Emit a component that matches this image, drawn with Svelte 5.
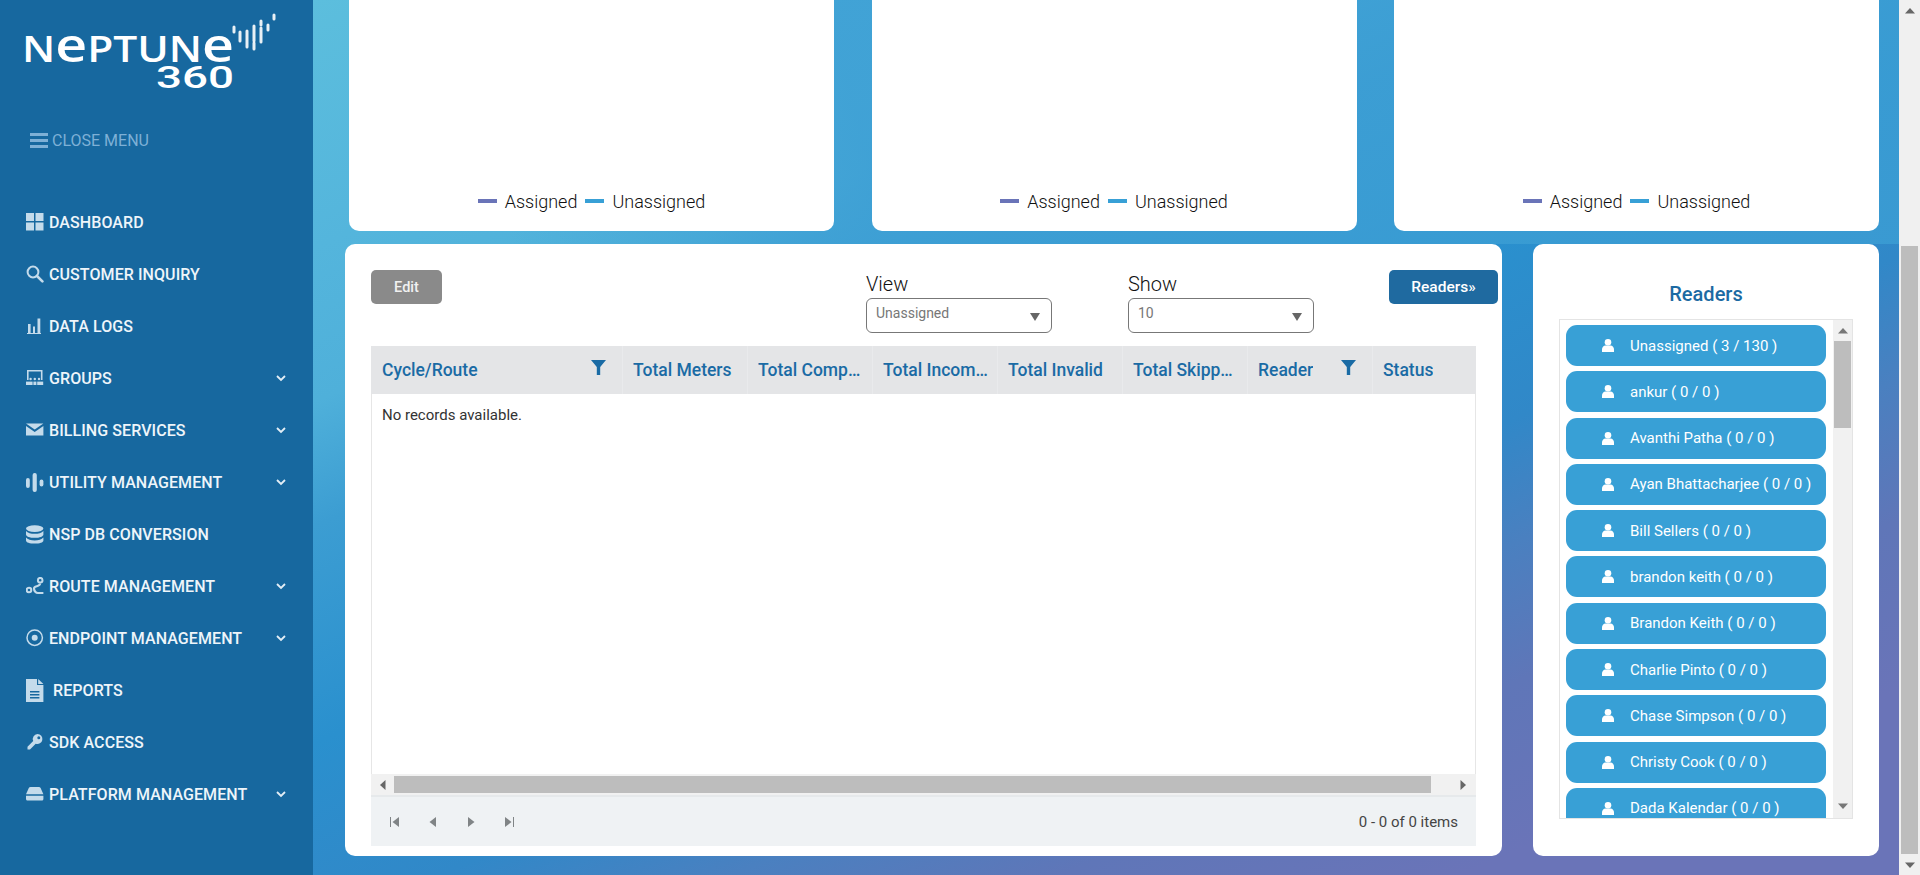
<script>
  const icons = {
    dashboard: '<rect x="0" y="0" width="8" height="8"/><rect x="9.5" y="0" width="8" height="8"/><rect x="0" y="9.5" width="8" height="8"/><rect x="9.5" y="9.5" width="8" height="8"/>',
    search: '<circle cx="7" cy="7" r="5.4" fill="none" stroke="currentColor" stroke-width="2"/><path d="M11 11l5.4 5.4" stroke="currentColor" stroke-width="2.6" stroke-linecap="round"/>',
    logs: '<rect x="2" y="7" width="2.6" height="9"/><rect x="7" y="9.5" width="2" height="6.5"/><rect x="11.5" y="1.5" width="2.8" height="14.5"/><rect x="1" y="16" width="14" height="1"/>',
    groups: '<path d="M1 1h15.5v10h-1.6V2.600H2.600V11H1z"/><circle cx="4.600" cy="10" r="1.200"/><circle cx="8.800" cy="10" r="1.200"/><circle cx="13" cy="10" r="1.200"/><rect x="0" y="12.600" width="6.600" height="3.400"/><rect x="7.400" y="12.600" width="3" height="3.400"/><rect x="11.200" y="12.600" width="6" height="3.400"/>',
    billing: '<path d="M0 2.400h17.400L8.700 8.400z"/><path d="M0 5v9.600h17.400V5L8.700 11z"/>',
    utility: '<rect x="0" y="5" width="3.800" height="10" rx="1.900"/><rect x="6.600" y="0" width="4.200" height="19" rx="2"/><rect x="13.600" y="6.500" width="3.800" height="7" rx="1.900"/>',
    db: '<ellipse cx="8.700" cy="3.600" rx="8.700" ry="3.400"/><path d="M0 6c1.600 2 5 2.800 8.700 2.800S15.800 8 17.400 6v3.400c0 2-3.800 3.400-8.700 3.400S0 11.400 0 9.400z"/><path d="M0 12.600c1.600 2 5 2.800 8.700 2.800s7.100-.8 8.700-2.800V15.400c0 2-3.800 3.200-8.700 3.200S0 17.400 0 15.400z"/>',
    route: '<circle cx="3" cy="13" r="2.300" fill="none" stroke="currentColor" stroke-width="2"/><circle cx="14.200" cy="3.200" r="2.300" fill="none" stroke="currentColor" stroke-width="2"/><path d="M14 6.500c0 3.500-6 2-6 5 0 2.500 2 4.500 4 4.500h5.400" fill="none" stroke="currentColor" stroke-width="2.200"/>',
    endpoint: '<circle cx="8.700" cy="8.700" r="7.700" fill="none" stroke="currentColor" stroke-width="1.500"/><circle cx="8.700" cy="8.700" r="3"/>',
    reports: '<path fill-rule="evenodd" d="M0 0h11v6h6.400v17H0zM4 12v1.400h9.400V12zM4 15v1.400h9.400V15zM4 18v1.400h9.400V18z"/><path d="M12.200 0l5.200 5h-5.200z"/>',
    sdk: '<path fill-rule="evenodd" d="M11.500 1a5 5 0 1 1-1.800 9.700L4 16.500H1.500v-2.700l5.700-5.700A5 5 0 0 1 11.500 1zm1.300 2.300a1.500 1.500 0 1 0 0 3 1.500 1.500 0 0 0 0-3z"/>',
    platform: '<path d="M4.600 2h8.200c.9 0 1.500.4 1.800 1.100l2.800 6.100H0l2.800-6.100C3.100 2.400 3.700 2 4.600 2z"/><path d="M0 10.800h17.400V14c0 .9-.6 1.500-1.500 1.500H1.500C.6 15.500 0 14.900 0 14z"/>'
  };

  const nav = [
    { label: 'Dashboard', icon: 'dashboard' },
    { label: 'Customer Inquiry', icon: 'search' },
    { label: 'Data Logs', icon: 'logs' },
    { label: 'Groups', icon: 'groups', more: true },
    { label: 'Billing Services', icon: 'billing', more: true },
    { label: 'Utility Management', icon: 'utility', more: true },
    { label: 'NSP DB Conversion', icon: 'db' },
    { label: 'Route Management', icon: 'route', more: true },
    { label: 'Endpoint Management', icon: 'endpoint', more: true },
    { label: 'Reports', icon: 'reports', wide: true },
    { label: 'SDK Access', icon: 'sdk' },
    { label: 'Platform Management', icon: 'platform', more: true }
  ];

  const columns = [
    { label: 'Cycle/Route', filter: true },
    { label: 'Total Meters' },
    { label: 'Total Completed' },
    { label: 'Total Incomplete' },
    { label: 'Total Invalid' },
    { label: 'Total Skipped' },
    { label: 'Reader', filter: true },
    { label: 'Status' }
  ];

  const readers = [
    'Unassigned ( 3 / 130 )',
    'ankur ( 0 / 0 )',
    'Avanthi Patha ( 0 / 0 )',
    'Ayan Bhattacharjee ( 0 / 0 )',
    'Bill Sellers ( 0 / 0 )',
    'brandon keith ( 0 / 0 )',
    'Brandon Keith ( 0 / 0 )',
    'Charlie Pinto ( 0 / 0 )',
    'Chase Simpson ( 0 / 0 )',
    'Christy Cook ( 0 / 0 )',
    'Dada Kalendar ( 0 / 0 )'
  ];

  const signal = [
    [234, 27, 32], [240, 32, 41], [247, 31, 47], [254, 26, 41], [254, 43, 49],
    [261, 21, 25], [261, 28, 42], [268, 25, 30], [274, 15, 19]
  ];
</script>

{#snippet tri(dir)}
  <svg class="tri" viewBox="0 0 10 10" width="10" height="10">
    {#if dir === 'up'}<path d="M0 7.500L5 2l5 5.500z" />
    {:else if dir === 'down'}<path d="M0 2.500L5 8l5-5.500z" />
    {:else if dir === 'left'}<path d="M7.500 0L2 5l5.500 5z" />
    {:else}<path d="M2.500 0L8 5l-5.500 5z" />{/if}
  </svg>
{/snippet}

{#snippet funnel()}
  <svg class="funnel" viewBox="0 0 16 16" width="15" height="15"><path d="M0 0h16L9.800 7.500V16H6.200V7.500z" /></svg>
{/snippet}

<div class="app">
  <aside class="sidebar">
    <div class="logo">
      <svg viewBox="0 0 313 118" width="313" height="118">
        <text x="22" y="62" class="word" textLength="212" lengthAdjust="spacingAndGlyphs">N<tspan class="small-e">e</tspan>PTUN<tspan class="small-e">e</tspan></text>
        <text x="156" y="88" class="num" textLength="78" lengthAdjust="spacingAndGlyphs">360</text>
        {#each signal as s}
          <line x1={s[0]} x2={s[0]} y1={s[1]} y2={s[2]} />
        {/each}
      </svg>
    </div>
    <div class="close-menu">
      <svg viewBox="0 0 18 15" width="18" height="15"><rect width="18" height="3" /><rect y="6" width="18" height="3" /><rect y="12" width="18" height="3" /></svg>
      <span>CLOSE MENU</span>
    </div>
    <nav>
      {#each nav as item}
        <div class="nav-item">
          <svg class="nav-icon" viewBox={item.wide ? '0 0 17.500 23' : '0 0 17.500 19'} width="17.500" height={item.wide ? 23 : 19}>{@html icons[item.icon]}</svg>
          <span class:shift={item.wide}>{item.label.toUpperCase()}</span>
          {#if item.more}
            <svg class="chev" viewBox="0 0 10 7" width="10" height="7"><path d="M1 1l4 4 4-4" /></svg>
          {/if}
        </div>
      {/each}
    </nav>
  </aside>

  <main class="content">
    <section class="charts">
      {#each [1, 2, 3] as c}
        <div class="chart-card">
          <div class="legend">
            <i class="sw assigned"></i><span>Assigned</span>
            <i class="sw unassigned"></i><span>Unassigned</span>
          </div>
        </div>
      {/each}
    </section>

    <section class="lower">
      <div class="panel table-panel">
        <div class="toolbar">
          <button class="btn edit" type="button">Edit</button>
          <div class="field">
            <label for="view-sel">View</label>
            <div class="select" id="view-sel"><span>Unassigned</span><b></b></div>
          </div>
          <div class="field">
            <label for="show-sel">Show</label>
            <div class="select" id="show-sel"><span>10</span><b></b></div>
          </div>
          <button class="btn readers-btn" type="button">Readers»</button>
        </div>

        <div class="grid">
          <div class="grid-head">
            {#each columns as col}
              <div class="th" class:has-filter={col.filter}>
                <span class="th-label">{col.label}</span>
                {#if col.filter}{@render funnel()}{/if}
              </div>
            {/each}
          </div>
          <div class="grid-body">No records available.</div>
          <div class="hbar">
            <span class="hbar-end">{@render tri('left')}</span>
            <div class="hbar-thumb"></div>
            <span class="hbar-end right">{@render tri('right')}</span>
          </div>
          <div class="pager">
            <div class="pager-btns">
              <svg viewBox="0 0 12 12" width="12" height="12"><rect x="1" y="1" width="1" height="10" /><path d="M10 1v10L3.500 6z" /></svg>
              <svg viewBox="0 0 12 12" width="12" height="12"><path d="M9 1v10L2.500 6z" /></svg>
              <svg viewBox="0 0 12 12" width="12" height="12"><path d="M3 1v10L9.500 6z" /></svg>
              <svg viewBox="0 0 12 12" width="12" height="12"><path d="M2 1v10L8.500 6z" /><rect x="10" y="1" width="1" height="10" /></svg>
            </div>
            <span class="pager-info">0 - 0 of 0 items</span>
          </div>
        </div>
      </div>

      <div class="panel readers-panel">
        <h3>Readers</h3>
        <div class="reader-box">
          <ul>
            {#each readers as name}
              <li>
                <svg viewBox="0 0 12 13" width="12" height="13"><circle cx="6" cy="3.300" r="3.300" /><path d="M0 13v-2.500C0 8.500 1.500 6.500 3.500 6.500h5c2 0 3.500 2 3.500 4V13z" /></svg>
                <span>{name}</span>
              </li>
            {/each}
          </ul>
          <div class="vbar">
            <span class="vbar-end">{@render tri('up')}</span>
            <div class="vbar-thumb"></div>
            <span class="vbar-end bottom">{@render tri('down')}</span>
          </div>
        </div>
      </div>
    </section>
  </main>

  <div class="page-bar">
    <span class="page-end">{@render tri('up')}</span>
    <div class="page-thumb"></div>
    <span class="page-end">{@render tri('down')}</span>
  </div>
</div>

<style>
  :global(body) {
    margin: 0;
    font-family: 'Roboto', sans-serif;
    overflow: hidden;
  }

  .app {
    display: flex;
    width: 1920px;
    height: 875px;
    overflow: hidden;
  }

  .sidebar {
    width: 313px;
    flex: none;
    background: #17689f;
  }

  .logo {
    height: 118px;
  }

  .logo svg {
    display: block;
  }

  .word {
    font-family: 'Open Sans', sans-serif;
    font-size: 36px;
    font-weight: 600;
    fill: #fff;
  }

  .small-e {
    font-size: 47px;
  }

  .num {
    font-family: 'Roboto', sans-serif;
    font-size: 31px;
    font-weight: 500;
    fill: #fff;
  }

  .logo line {
    stroke: #fff;
    stroke-width: 3;
    stroke-linecap: round;
    opacity: 0.9;
  }

  .close-menu {
    height: 44px;
    display: flex;
    align-items: center;
    gap: 4px;
    padding-left: 30px;
    color: #7eb0d6;
    font-size: 16px;
    margin-bottom: 34px;
  }

  .close-menu svg {
    fill: currentColor;
  }

  .nav-item {
    position: relative;
    height: 52px;
    display: flex;
    align-items: center;
    padding-left: 26px;
    color: #eef5fa;
    font-size: 16px;
    font-weight: 500;
    letter-spacing: 0.08px;
  }

  .nav-icon {
    flex: none;
    fill: #c4dbeb;
    color: #c4dbeb;
    margin-right: 5.500px;
  }

  .shift {
    margin-left: 4px;
  }

  .chev {
    position: absolute;
    left: 276px;
    top: 23px;
    fill: none;
    stroke: #e3eef6;
    stroke-width: 1.800;
  }

  .content {
    width: 1586px;
    flex: none;
    background: linear-gradient(157deg, #5cbedd 0%, #54b5dc 16%, #4fb0da 26%, #3c9dd2 34%, #2a90ce 48%, #3188c8 60%, #4a80c0 68%, #5f76b8 77%, #6a74b8 88%);
  }

  .charts {
    display: grid;
    grid-template-columns: repeat(3, 485px);
    gap: 37.500px;
    padding: 0 0 13px 36px;
    background: linear-gradient(75deg, rgba(60, 158, 212, 0) 12%, rgba(60, 158, 212, 0.8) 35%);
  }

  .chart-card {
    height: 231px;
    background: #fff;
    border-radius: 0 0 10px 10px;
    display: flex;
    align-items: flex-end;
    justify-content: center;
  }

  .legend {
    display: flex;
    align-items: center;
    height: 60px;
    font-size: 18px;
    font-weight: 300;
    color: #111;
  }

  .legend span {
    margin-right: 8px;
  }

  .legend span:last-child {
    margin-right: 0;
  }

  .sw {
    width: 19px;
    height: 4px;
    margin-right: 8px;
  }

  .assigned {
    background: #6a74b8;
  }

  .unassigned {
    background: #38a0d6;
  }

  .lower {
    display: grid;
    grid-template-columns: 1157px 346px;
    gap: 31px;
    padding-left: 32px;
  }

  .panel {
    height: 612px;
    box-sizing: border-box;
    background: #fff;
    border-radius: 10px;
  }

  .table-panel {
    padding: 26px 26px 10px 26px;
    display: flex;
    flex-direction: column;
  }

  .toolbar {
    display: grid;
    grid-template-columns: 495px 262px 261px 109px;
    height: 76px;
    flex: none;
    align-items: start;
  }

  .btn {
    height: 34px;
    border: 0;
    border-radius: 5px;
    color: #fff;
    font-family: 'Roboto', sans-serif;
    font-weight: 500;
    padding: 0;
  }

  .edit {
    width: 71px;
    background: #8a8a8a;
    color: #f1f1f1;
    font-size: 14.500px;
  }

  .readers-btn {
    width: 109px;
    background: #1f6aa0;
    font-size: 15.500px;
  }

  .field label {
    display: block;
    height: 28px;
    line-height: 28px;
    font-size: 20px;
    font-weight: 300;
    color: #111;
  }

  .select {
    width: 186px;
    height: 35px;
    box-sizing: border-box;
    border: 1px solid #777;
    border-radius: 6px;
    padding: 5px 9px;
    display: flex;
    justify-content: space-between;
    color: #777;
    font-size: 14px;
    line-height: 18px;
  }

  .select b {
    width: 0;
    height: 0;
    margin: 9px 2px 0 0;
    border-left: 5px solid transparent;
    border-right: 5px solid transparent;
    border-top: 8px solid #666;
  }

  .grid {
    flex: 1;
    display: flex;
    flex-direction: column;
    min-height: 0;
  }

  .grid-head {
    height: 48px;
    flex: none;
    display: grid;
    grid-template-columns: 252px repeat(6, 125px) 1fr;
    background: #e4e5e7;
  }

  .th {
    display: flex;
    align-items: center;
    justify-content: space-between;
    padding: 0 8px 0 10px;
    border-right: 1px solid #e9eaec;
    min-width: 0;
    color: #1a6ba5;
    font-size: 17.500px;
    font-weight: 500;
  }

  .th:first-child {
    padding-left: 11px;
  }

  .th.has-filter {
    padding-right: 16px;
  }

  .th:last-child {
    border-right: 0;
  }

  .th-label {
    white-space: nowrap;
    overflow: hidden;
    text-overflow: ellipsis;
  }

  .funnel {
    flex: none;
    fill: #1a6ba5;
    margin-top: -6px;
  }

  .grid-body {
    flex: 1;
    padding: 12px 10px 0 10px;
    border-left: 1px solid #e6e6e6;
    border-right: 1px solid #e6e6e6;
    font-size: 15px;
    line-height: 18px;
    color: #333;
  }

  .hbar {
    height: 21px;
    flex: none;
    display: flex;
    align-items: center;
    background: #f1f1f1;
    border-bottom: 2px solid #e6e9eb;
  }

  .hbar-end {
    width: 23px;
    flex: none;
    display: flex;
    justify-content: center;
  }

  .hbar-end.right {
    width: 45px;
    justify-content: flex-end;
    padding-right: 8px;
    box-sizing: border-box;
  }

  .hbar-thumb {
    flex: 1;
    height: 17px;
    background: #bdbdbd;
  }

  .tri {
    display: block;
    fill: #666;
  }

  .pager {
    height: 49px;
    flex: none;
    display: flex;
    align-items: center;
    justify-content: space-between;
    padding: 0 18px;
    background: #eff2f4;
    font-size: 15px;
    color: #444;
  }

  .pager-btns {
    display: flex;
    gap: 26px;
    fill: #808486;
  }

  .readers-panel h3 {
    margin: 0;
    padding-top: 38px;
    height: 75px;
    box-sizing: border-box;
    text-align: center;
    font-size: 20px;
    line-height: 24px;
    font-weight: 500;
    color: #1c6aa3;
  }

  .reader-box {
    display: flex;
    width: 294px;
    height: 500px;
    margin-left: 26px;
    box-sizing: border-box;
    border: 1px solid #e4e4e4;
    overflow: hidden;
  }

  .reader-box ul {
    list-style: none;
    margin: 0;
    padding: 5px 6px 0;
    width: 272px;
    box-sizing: border-box;
    flex: none;
    overflow: hidden;
  }

  .reader-box li {
    height: 41px;
    margin-bottom: 5.300px;
    border-radius: 11px;
    background: #38a0d6;
    color: #fff;
    display: flex;
    align-items: center;
    padding-left: 36px;
    font-size: 15px;
    white-space: nowrap;
  }

  .reader-box li svg {
    fill: #fff;
    margin-right: 16px;
    flex: none;
  }

  .vbar {
    flex: 1;
    margin-left: 1px;
    background: #f1f1f1;
    display: flex;
    flex-direction: column;
    align-items: center;
  }

  .vbar-end {
    height: 21px;
    display: flex;
    align-items: center;
  }

  .vbar-end.bottom {
    margin-top: auto;
    height: 24px;
  }

  .vbar-thumb {
    width: 17px;
    height: 87px;
    background: #bdbdbd;
  }

  .vbar .tri {
    fill: #777;
  }

  .page-bar {
    width: 21px;
    flex: none;
    background: #f0f0f0;
    display: flex;
    flex-direction: column;
    align-items: center;
  }

  .page-end {
    height: 21px;
    display: flex;
    align-items: center;
  }

  .page-thumb {
    width: 17px;
    height: 608px;
    margin-top: 225px;
    background: #bdbdbd;
  }
</style>
